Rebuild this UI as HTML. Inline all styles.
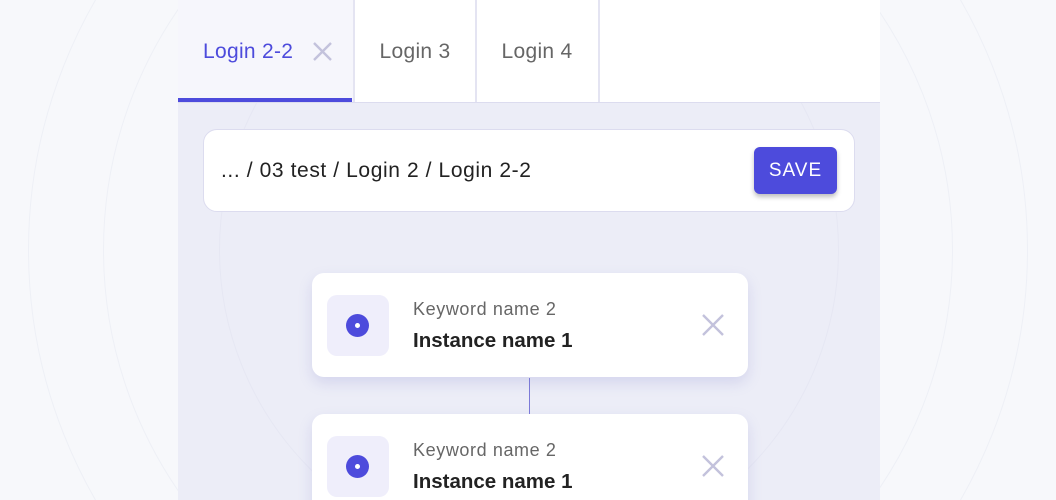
<!DOCTYPE html>
<html><head><style>
*{margin:0;padding:0;box-sizing:border-box}
html,body{width:1056px;height:500px;overflow:hidden}
body{background:#f7f8fb;font-family:"Liberation Sans",sans-serif}
.wrap{position:relative;width:1056px;height:500px;overflow:hidden;background:#f7f8fb}
.circ{position:absolute;border-radius:50%;border:1px solid #eef0f6;left:50%;top:50%;transform:translate(-50%,-50%)}
.panel{position:absolute;left:178px;top:0;width:702px;height:500px;background:#ecedf7;overflow:hidden}
.tabs{position:absolute;left:0;top:0;width:702px;height:103px;background:#fff;border-bottom:1px solid #dcdcef}
.tab{position:absolute;top:0;height:102px;font-size:21px;letter-spacing:.3px;color:#666;line-height:104px;text-align:center}
.sep{position:absolute;top:0;width:2px;height:102px;background:#e4e4f2}
.bc{position:absolute;left:25px;top:129px;width:652px;height:83px;background:#fff;border:1px solid #dcdcef;border-radius:14px}
.bc span{position:absolute;left:17px;top:29px;font-size:21px;letter-spacing:.6px;color:#222}
.save{position:absolute;left:550px;top:17px;width:83px;height:47px;background:#4d4bdc;border-radius:6px;color:#fff;font-size:19px;letter-spacing:1px;text-align:center;line-height:48px;box-shadow:0 3px 5px rgba(0,0,0,.25)}
.card{position:absolute;left:134px;width:436px;height:104px;background:#fff;border-radius:12px;box-shadow:0 6px 14px rgba(120,120,200,.2)}
.ic{position:absolute;left:15px;top:22px;width:62px;height:61px;background:#efeefb;border-radius:10px}
.dot{position:absolute;left:19px;top:19px;width:23px;height:23px;border-radius:50%;background:#4d4bdc}
.dot:after{content:"";position:absolute;left:9px;top:9px;width:5px;height:5px;border-radius:50%;background:#fff}
.kw{position:absolute;left:101px;top:26px;font-size:18px;letter-spacing:.6px;color:#666}
.in{position:absolute;left:101px;top:56px;font-size:20.5px;font-weight:bold;color:#222}
.x{position:absolute;left:390px;top:41px}
</style></head><body><div class="wrap">
<div class="circ" style="width:400px;height:400px"></div>
<div class="circ" style="width:620px;height:620px"></div>
<div class="circ" style="width:850px;height:850px"></div>
<div class="circ" style="width:1000px;height:1000px"></div>
<div class="panel">
<div class="circ" style="width:620px;height:620px;border-color:#e6e7f3"></div>
<div class="tabs">
<div class="tab" style="left:0;width:175px;background:#f6f6fc;color:#4d4bdc;text-align:left;padding-left:25px">Login 2-2
<svg style="position:absolute;left:135px;top:42px" width="19" height="19" viewBox="0 0 19 19"><path d="M1 1L18 18M18 1L1 18" stroke="#c3c2dc" stroke-width="2.4"/></svg></div>
<div style="position:absolute;left:0;top:98px;width:174px;height:4px;background:#4d4bdc"></div>
<div class="sep" style="left:175px"></div>
<div class="tab" style="left:177px;width:120px">Login 3</div>
<div class="sep" style="left:297px"></div>
<div class="tab" style="left:299px;width:120px">Login 4</div>
<div class="sep" style="left:420px"></div>
</div>
<div class="bc"><span>... / 03 test / Login 2 / Login 2-2</span><div class="save">SAVE</div></div>
<div style="position:absolute;left:351px;top:378px;width:1px;height:37px;background:#7c7ad8"></div>
<div class="card" style="top:273px"><div class="ic"><div class="dot"></div></div><div class="kw">Keyword name 2</div><div class="in">Instance name 1</div>
<svg class="x" width="22" height="22" viewBox="0 0 22 22"><path d="M1 1L21 21M21 1L1 21" stroke="#c3c2dc" stroke-width="2.4"/></svg></div>
<div class="card" style="top:414px"><div class="ic"><div class="dot"></div></div><div class="kw">Keyword name 2</div><div class="in">Instance name 1</div>
<svg class="x" width="22" height="22" viewBox="0 0 22 22"><path d="M1 1L21 21M21 1L1 21" stroke="#c3c2dc" stroke-width="2.4"/></svg></div>
</div>
</div></body></html>
